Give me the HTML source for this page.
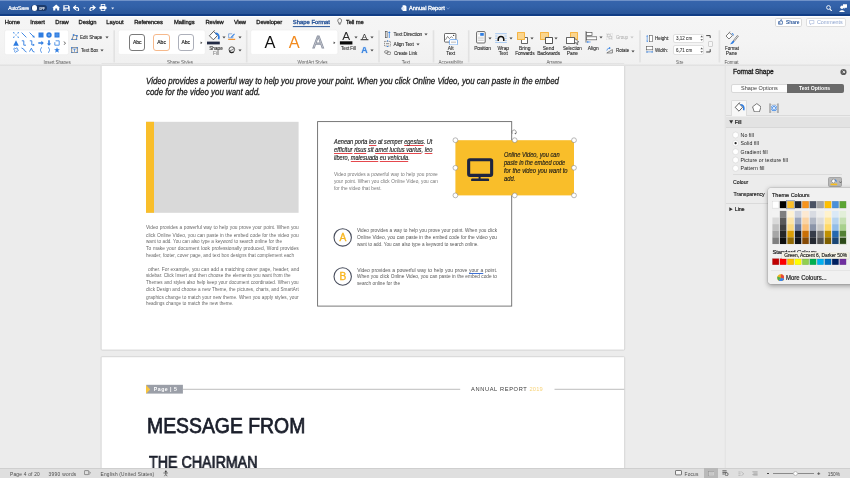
<!DOCTYPE html>
<html lang="en"><head><meta charset="utf-8"><title>Annual Report</title>
<style>
html,body{margin:0;padding:0}
body{width:850px;height:478px;overflow:hidden;position:relative;background:#ebebeb;font-family:"Liberation Sans",sans-serif;}
#root{position:absolute;left:0;top:0;width:850px;height:478px;overflow:hidden;will-change:transform;}
.t{position:absolute;white-space:pre;line-height:1;}
.b{position:absolute;display:block;}
.j{position:absolute;white-space:nowrap;line-height:1;text-align:justify;text-align-last:justify;}
</style></head><body><div id="root">

<!-- title bar -->
<div class="b" style="left:0.00px;top:0.00px;width:850.00px;height:16.00px;background:linear-gradient(#3765ad 0,#3261a8 40%,#2a5699 86%,#113d85 89%,#113d85 100%);"></div>
<div class="b" style="left:0.00px;top:0.00px;width:850.00px;height:1.00px;background:#7092c8;"></div>
<div class="t" style="left:8.20px;top:6.00px;font-size:5px;color:#fff;letter-spacing:-0.123px;-webkit-text-stroke:0.2px #fff;">AutoSave</div>
<div class="b" style="left:31.40px;top:5.00px;width:16.10px;height:6.00px;background:#1c3a6b;border-radius:3px;"></div>
<div class="b" style="left:31.60px;top:5.10px;width:5.80px;height:5.80px;background:#fff;border-radius:3px;"></div>
<div class="t" style="left:38.60px;top:8.00px;font-size:3.4px;color:#fff;font-weight:700;transform-origin:0 0;transform:scaleX(0.8553);">OFF</div>
<svg class="b" style="left:51.50px;top:4.30px;" width="8.4" height="7" viewBox="0 0 8.4 7"><path d="M4.2 0.4 L0.3 3.8 L1.2 3.8 L1.2 6.6 L3.3 6.6 L3.3 4.6 L5.1 4.6 L5.1 6.6 L7.2 6.6 L7.2 3.8 L8.1 3.8 Z" fill="#fff"/></svg>
<svg class="b" style="left:62.50px;top:4.80px;" width="7" height="6.4" viewBox="0 0 7 6.4"><path d="M0.3 0.3 H5.6 L6.7 1.4 V6.1 H0.3 Z" fill="#fff"/><rect x="1.6" y="0.9" width="3.4" height="1.7" fill="#2d5aa3"/><rect x="1.6" y="3.8" width="3.8" height="2.3" fill="#2d5aa3"/><rect x="2.2" y="4.3" width="1.2" height="1.4" fill="#fff"/></svg>
<svg class="b" style="left:73.00px;top:4.60px;" width="7.6" height="6.6" viewBox="0 0 7.6 6.6"><path d="M3 0.5 L0.5 2.6 L3 4.7" fill="none" stroke="#fff" stroke-width="1.2"/><path d="M0.9 2.6 H4.6 A2.1 2.1 0 0 1 4.6 6.2 H3" fill="none" stroke="#fff" stroke-width="1.2"/></svg>
<svg class="b" style="left:82.60px;top:7.00px;" width="3" height="2.4" viewBox="0 0 3 2.4"><path d="M0.2 0.4 L1.5 2 L2.8 0.4 Z" fill="#a9bfe3"/></svg>
<svg class="b" style="left:88.40px;top:4.60px;" width="7.6" height="6.6" viewBox="0 0 7.6 6.6"><path d="M4.6 0.5 L7.1 2.6 L4.6 4.7" fill="none" stroke="#fff" stroke-width="1.2"/><path d="M6.7 2.6 H3 A2.1 2.1 0 0 0 3 6.2 H4.2" fill="none" stroke="#fff" stroke-width="1.2"/></svg>
<svg class="b" style="left:98.70px;top:4.40px;" width="8" height="7" viewBox="0 0 8 7"><rect x="2.2" y="0.4" width="3.6" height="2.2" fill="none" stroke="#fff" stroke-width="0.8"/><rect x="0.5" y="2.4" width="7" height="2.8" rx="0.8" fill="#fff"/><rect x="2.2" y="4.4" width="3.6" height="2.2" fill="#2d5aa3" stroke="#fff" stroke-width="0.8"/></svg>
<svg class="b" style="left:111.30px;top:7.20px;" width="3.4" height="2.8" viewBox="0 0 3.4 2.8"><path d="M0.2 0.4 L1.7 2.4 L3.2 0.4 Z" fill="#dfe7f5"/></svg>
<svg class="b" style="left:401.00px;top:4.80px;" width="5.8" height="6.6" viewBox="0 0 5.8 6.6"><path d="M1.6 0.3 H4.2 L5.5 1.6 V6.3 H1.6 Z" fill="#fff"/><circle cx="1.9" cy="3.4" r="1.6" fill="#dce6f7"/></svg>
<div class="t" style="left:408.80px;top:5.00px;font-size:6px;color:#fff;transform-origin:0 0;transform:scaleX(0.9307);-webkit-text-stroke:0.3px #fff;">Annual Report</div>
<svg class="b" style="left:446.00px;top:7.20px;" width="4" height="3" viewBox="0 0 4 3"><path d="M0.5 0.5 L2 2.2 L3.5 0.5" fill="none" stroke="#7f9fd6" stroke-width="0.7"/></svg>
<svg class="b" style="left:826.00px;top:4.60px;" width="6.4" height="6.8" viewBox="0 0 6.4 6.8"><circle cx="2.5" cy="2.5" r="1.9" fill="none" stroke="#fff" stroke-width="0.9"/><path d="M3.9 4 L5.9 6.2" stroke="#fff" stroke-width="1.1"/></svg>
<svg class="b" style="left:838.50px;top:3.60px;" width="8.2" height="8.6" viewBox="0 0 8.2 8.6"><circle cx="3" cy="3.2" r="1.7" fill="#fff"/><path d="M0.2 8.4 C0.2 5.4 5.8 5.4 5.8 8.4 Z" fill="#fff"/><path d="M4 0.3 H8 V3.8 H6.4 L5.4 4.9 V3.8 H4 Z" fill="#fff"/></svg>
<!-- ribbon -->
<div class="b" style="left:0.00px;top:15.60px;width:850.00px;height:50.70px;background:linear-gradient(#f5f5f5 0,#f4f4f4 50%,#f0f0f0 100%);"></div>
<div class="b" style="left:0.00px;top:15.60px;width:850.00px;height:1.90px;background:linear-gradient(#ffffff 0,#ffffff 60%,#f4f4f4 100%);"></div>
<div class="t" style="left:4.80px;top:20.00px;font-size:5.8px;color:#1e1e1e;letter-spacing:-0.117px;-webkit-text-stroke:0.3px #1e1e1e;">Home</div>
<div class="t" style="left:30.20px;top:20.00px;font-size:5.8px;color:#1e1e1e;letter-spacing:0.050px;-webkit-text-stroke:0.3px #1e1e1e;">Insert</div>
<div class="t" style="left:55.30px;top:20.00px;font-size:5.8px;color:#1e1e1e;letter-spacing:-0.008px;-webkit-text-stroke:0.3px #1e1e1e;">Draw</div>
<div class="t" style="left:78.50px;top:20.00px;font-size:5.8px;color:#1e1e1e;letter-spacing:-0.008px;-webkit-text-stroke:0.3px #1e1e1e;">Design</div>
<div class="t" style="left:106.30px;top:20.00px;font-size:5.8px;color:#1e1e1e;letter-spacing:-0.018px;-webkit-text-stroke:0.3px #1e1e1e;">Layout</div>
<div class="t" style="left:134.20px;top:20.00px;font-size:5.8px;color:#1e1e1e;letter-spacing:-0.106px;-webkit-text-stroke:0.3px #1e1e1e;">References</div>
<div class="t" style="left:173.90px;top:20.00px;font-size:5.8px;color:#1e1e1e;letter-spacing:-0.083px;-webkit-text-stroke:0.3px #1e1e1e;">Mailings</div>
<div class="t" style="left:205.60px;top:20.00px;font-size:5.8px;color:#1e1e1e;letter-spacing:-0.169px;-webkit-text-stroke:0.3px #1e1e1e;">Review</div>
<div class="t" style="left:234.00px;top:20.00px;font-size:5.8px;color:#1e1e1e;letter-spacing:-0.142px;-webkit-text-stroke:0.3px #1e1e1e;">View</div>
<div class="t" style="left:256.30px;top:20.00px;font-size:5.8px;color:#1e1e1e;letter-spacing:-0.082px;-webkit-text-stroke:0.3px #1e1e1e;">Developer</div>
<div class="t" style="left:292.80px;top:20.00px;font-size:5.8px;color:#2b579a;letter-spacing:0.039px;-webkit-text-stroke:0.35px #2b579a;">Shape Format</div>
<svg class="b" style="left:291px;top:25px" width="40" height="4"><rect x="1.80" y="1.10" width="37.20" height="1.00" rx="0" fill="#2b579a"/></svg>
<svg class="b" style="left:336.60px;top:18.40px;" width="5.4" height="7.4" viewBox="0 0 5.4 7.4"><path d="M2.7 0.5 A2.1 2.1 0 0 1 3.9 4.2 V5.2 H1.5 V4.2 A2.1 2.1 0 0 1 2.7 0.5 Z" fill="none" stroke="#333" stroke-width="0.6"/><path d="M1.8 6.2 H3.6" stroke="#333" stroke-width="0.6"/></svg>
<div class="t" style="left:346.00px;top:20.00px;font-size:5.8px;color:#1e1e1e;letter-spacing:-0.125px;-webkit-text-stroke:0.3px #1e1e1e;">Tell me</div>
<div class="b" style="left:774.60px;top:17.60px;width:27.40px;height:9.70px;background:#fff;border:0.7px solid #d9d9d9;box-sizing:border-box;border-radius:1.8px;"></div>
<svg class="b" style="left:777.50px;top:19.40px;" width="5.2" height="5.6" viewBox="0 0 5.2 5.6"><path d="M0.5 2.6 H1.8 V5.2 H0.5 Z M1.8 2.8 L3 0.5 C3.8 0.5 3.6 1.6 3.4 2.3 H4.7 L4.3 5.2 H1.8" fill="none" stroke="#2b579a" stroke-width="0.7"/></svg>
<div class="t" style="left:785.50px;top:20.00px;font-size:5.4px;color:#2b579a;font-weight:700;transform-origin:0 0;transform:scaleX(0.9009);">Share</div>
<div class="b" style="left:806.00px;top:17.60px;width:39.70px;height:9.70px;background:#fff;border:0.7px solid #dedede;box-sizing:border-box;border-radius:1.8px;"></div>
<svg class="b" style="left:809.40px;top:19.80px;" width="5.4" height="5.4" viewBox="0 0 5.4 5.4"><path d="M0.5 0.5 H4.9 V3.6 H2.6 L1.5 4.8 V3.6 H0.5 Z" fill="none" stroke="#9fb2d6" stroke-width="0.6"/></svg>
<div class="t" style="left:817.00px;top:20.00px;font-size:5.4px;color:#8fa5cf;letter-spacing:-0.058px;">Comments</div>
<svg class="b" style="left:112px;top:29px" width="4" height="35"><rect x="1.40" y="1.30" width="1.60" height="32.10" rx="0" fill="#e2e2e2"/></svg>
<svg class="b" style="left:244px;top:29px" width="5" height="35"><rect x="1.90" y="1.30" width="1.60" height="32.10" rx="0" fill="#e2e2e2"/></svg>
<svg class="b" style="left:377px;top:29px" width="4" height="35"><rect x="1.20" y="1.30" width="1.60" height="32.10" rx="0" fill="#e2e2e2"/></svg>
<svg class="b" style="left:431px;top:29px" width="5" height="35"><rect x="1.70" y="1.30" width="1.60" height="32.10" rx="0" fill="#e2e2e2"/></svg>
<svg class="b" style="left:466px;top:29px" width="5" height="35"><rect x="1.90" y="1.30" width="1.60" height="32.10" rx="0" fill="#e2e2e2"/></svg>
<svg class="b" style="left:638px;top:29px" width="4" height="35"><rect x="1.20" y="1.30" width="1.60" height="32.10" rx="0" fill="#e2e2e2"/></svg>
<svg class="b" style="left:717px;top:29px" width="5" height="35"><rect x="1.60" y="1.30" width="1.60" height="32.10" rx="0" fill="#e2e2e2"/></svg>
<div class="t" style="left:43.60px;top:61.00px;font-size:4.6px;color:#5a5a5a;letter-spacing:-0.105px;">Insert Shapes</div>
<div class="t" style="left:167.00px;top:61.00px;font-size:4.6px;color:#5a5a5a;letter-spacing:-0.090px;">Shape Styles</div>
<div class="t" style="left:297.50px;top:61.00px;font-size:4.6px;color:#5a5a5a;letter-spacing:-0.047px;">WordArt Styles</div>
<div class="t" style="left:401.80px;top:61.00px;font-size:4.6px;color:#5a5a5a;letter-spacing:-0.059px;">Text</div>
<div class="t" style="left:438.40px;top:61.00px;font-size:4.6px;color:#5a5a5a;letter-spacing:-0.033px;">Accessibility</div>
<div class="t" style="left:546.40px;top:61.00px;font-size:4.6px;color:#5a5a5a;letter-spacing:-0.106px;">Arrange</div>
<div class="t" style="left:675.80px;top:61.00px;font-size:4.6px;color:#5a5a5a;transform-origin:0 0;transform:scaleX(0.8392);">Size</div>
<div class="t" style="left:724.40px;top:61.00px;font-size:4.6px;color:#5a5a5a;letter-spacing:-0.060px;">Format</div>
<svg class="b" style="left:3px;top:29px" width="67" height="27"><rect x="1.60" y="1.10" width="64.00" height="24.60" rx="2" fill="#fff" stroke="#e6e6e6" stroke-width="0.5"/></svg>
<svg class="b" style="left:13.00px;top:31.90px;" width="6" height="6" viewBox="0 0 6 6"><path d="M0.5 0.5 L5.5 5.5 M5.5 0.5 L0.5 5.5" stroke="#9fc4f2" stroke-width="0.6"/><rect x="0" y="0" width="1.3" height="1.3" fill="#6aa5ec"/><rect x="4.7" y="0" width="1.3" height="1.3" fill="#6aa5ec"/><rect x="0" y="4.7" width="1.3" height="1.3" fill="#6aa5ec"/><rect x="4.7" y="4.7" width="1.3" height="1.3" fill="#6aa5ec"/></svg>
<svg class="b" style="left:21.20px;top:31.90px;" width="6" height="6" viewBox="0 0 6 6"><path d="M0.6 0.6 L5.4 5.4" stroke="#2f7de1" stroke-width="0.9"/></svg>
<svg class="b" style="left:29.40px;top:31.90px;" width="6" height="6" viewBox="0 0 6 6"><path d="M0.6 0.6 L4.6 4.6" stroke="#2f7de1" stroke-width="0.9"/><path d="M5.8 5.8 L3.2 5 L5 3.2 Z" fill="#2f7de1"/></svg>
<svg class="b" style="left:37.50px;top:31.90px;" width="6" height="6" viewBox="0 0 6 6"><rect x="0.5" y="0.5" width="5" height="5" fill="#2f7de1"/></svg>
<svg class="b" style="left:45.70px;top:31.90px;" width="6" height="6" viewBox="0 0 6 6"><circle cx="3" cy="3" r="2.7" fill="#2f7de1"/><circle cx="3" cy="3" r="0.8" fill="#9fc4f2"/></svg>
<svg class="b" style="left:54.20px;top:31.90px;" width="6" height="6" viewBox="0 0 6 6"><rect x="0.5" y="0.5" width="5" height="5" fill="#2f7de1"/><path d="M0.5 3 H5.5 M3 0.5 V5.5" stroke="#7fb0ee" stroke-width="0.4"/></svg>
<svg class="b" style="left:13.00px;top:39.70px;" width="6" height="6" viewBox="0 0 6 6"><path d="M3 0.3 L5.8 5.7 H0.2 Z" fill="#2f7de1"/></svg>
<svg class="b" style="left:21.20px;top:39.70px;" width="6" height="6" viewBox="0 0 6 6"><path d="M0.8 0.8 H2.8 V5.2 H5" fill="none" stroke="#2f7de1" stroke-width="0.9"/></svg>
<svg class="b" style="left:29.40px;top:39.70px;" width="6" height="6" viewBox="0 0 6 6"><path d="M0.8 0.8 H2.8 V5 H4.2" fill="none" stroke="#2f7de1" stroke-width="0.9"/><path d="M5.8 5 L4 3.8 V6 Z" fill="#2f7de1"/></svg>
<svg class="b" style="left:37.50px;top:39.70px;" width="6" height="6" viewBox="0 0 6 6"><path d="M0.3 2.2 H3.4 V0.8 L5.8 3 L3.4 5.2 V3.8 H0.3 Z" fill="#2f7de1"/></svg>
<svg class="b" style="left:45.70px;top:39.70px;" width="6" height="6" viewBox="0 0 6 6"><path d="M2.2 0.3 V3.4 H0.8 L3 5.8 L5.2 3.4 H3.8 V0.3 Z" fill="#2f7de1"/></svg>
<svg class="b" style="left:54.20px;top:39.70px;" width="6" height="6" viewBox="0 0 6 6"><path d="M1.6 0.8 H5.2 V5.2 H0.8 V2.2" fill="none" stroke="#2f7de1" stroke-width="0.8"/></svg>
<svg class="b" style="left:13.00px;top:47.30px;" width="6" height="6" viewBox="0 0 6 6"><path d="M3 2 C0.5 -0.5 0 3 2 3.4 C0.4 5.4 3.6 6.2 3.6 4 C5.6 5 6 2 4.2 2.4 C5 0.4 3 0 3 2 Z" fill="none" stroke="#2f7de1" stroke-width="0.7"/></svg>
<svg class="b" style="left:21.20px;top:47.30px;" width="6" height="6" viewBox="0 0 6 6"><path d="M0.5 1 L2.6 2 L3.4 3.6 L5.5 5" fill="none" stroke="#2f7de1" stroke-width="0.9"/></svg>
<svg class="b" style="left:29.40px;top:47.30px;" width="6" height="6" viewBox="0 0 6 6"><path d="M0.5 4.6 L2.4 1.2 L3.8 4.4 L5.5 5" fill="none" stroke="#2f7de1" stroke-width="0.9"/></svg>
<svg class="b" style="left:37.50px;top:47.30px;" width="6" height="6" viewBox="0 0 6 6"><path d="M4 0.4 C2.6 0.4 3.2 2.6 2 3 C3.2 3.4 2.6 5.6 4 5.6" fill="none" stroke="#2f7de1" stroke-width="0.8"/></svg>
<svg class="b" style="left:45.70px;top:47.30px;" width="6" height="6" viewBox="0 0 6 6"><path d="M2 0.4 C3.4 0.4 2.8 2.6 4 3 C2.8 3.4 3.4 5.6 2 5.6" fill="none" stroke="#2f7de1" stroke-width="0.8"/></svg>
<svg class="b" style="left:54.20px;top:47.30px;" width="6" height="6" viewBox="0 0 6 6"><path d="M3 0.2 L3.8 2.2 L5.9 2.3 L4.2 3.6 L4.8 5.7 L3 4.5 L1.2 5.7 L1.8 3.6 L0.1 2.3 L2.2 2.2 Z" fill="#2f7de1"/></svg>
<svg class="b" style="left:63.40px;top:40.50px;" width="3.4" height="4.4" viewBox="0 0 3.4 4.4"><path d="M0.7 0.5 L2.6 2.2 L0.7 3.9" fill="none" stroke="#333" stroke-width="0.7"/></svg>
<svg class="b" style="left:71.20px;top:33.70px;" width="7" height="6.6" viewBox="0 0 7 6.6"><path d="M1 5.6 L2.6 1 L6 1.8 L5.4 5.6 Z" fill="none" stroke="#444" stroke-width="0.6"/><rect x="0.2" y="4.8" width="1.5" height="1.5" fill="#2f7de1"/><rect x="1.8" y="0.2" width="1.5" height="1.5" fill="#2f7de1"/><rect x="5.2" y="1" width="1.5" height="1.5" fill="#2f7de1"/><rect x="4.7" y="4.8" width="1.5" height="1.5" fill="#2f7de1"/></svg>
<div class="t" style="left:80.40px;top:36.00px;font-size:4.9px;color:#1e1e1e;transform-origin:0 0;transform:scaleX(0.9358);-webkit-text-stroke:0.08px #1e1e1e;">Edit Shape</div>
<svg class="b" style="left:104.60px;top:36.10px;" width="4" height="3" viewBox="0 0 4 3"><path d="M0.4 0.5 L2 2.5 L3.6 0.5 Z" fill="#444"/></svg>
<svg class="b" style="left:71.20px;top:46.90px;" width="7" height="6.6" viewBox="0 0 7 6.6"><rect x="0.8" y="0.8" width="5.4" height="5" fill="none" stroke="#444" stroke-width="0.6"/><path d="M2.3 2.2 H4.7 M3.5 2.2 V4.8" stroke="#2f7de1" stroke-width="0.7"/><rect x="0.1" y="0.1" width="1.3" height="1.3" fill="#2f7de1"/><rect x="5.6" y="0.1" width="1.3" height="1.3" fill="#2f7de1"/><rect x="0.1" y="5.2" width="1.3" height="1.3" fill="#2f7de1"/><rect x="5.6" y="5.2" width="1.3" height="1.3" fill="#2f7de1"/></svg>
<div class="t" style="left:81.00px;top:49.00px;font-size:4.9px;color:#1e1e1e;transform-origin:0 0;transform:scaleX(0.9272);-webkit-text-stroke:0.08px #1e1e1e;">Text Box</div>
<svg class="b" style="left:99.80px;top:49.30px;" width="4" height="3" viewBox="0 0 4 3"><path d="M0.4 0.5 L2 2.5 L3.6 0.5 Z" fill="#444"/></svg>
<svg class="b" style="left:117px;top:29px" width="90" height="27"><rect x="1.30" y="1.10" width="86.90" height="24.30" rx="2" fill="#fff" stroke="#e8e8e8" stroke-width="0.5"/></svg>
<div class="b" style="left:129.00px;top:34.40px;width:16.40px;height:16.20px;background:#fff;border:1px solid #7a7a7a;box-sizing:border-box;border-radius:3px;"></div>
<div class="t" style="left:37.20px;width:200px;text-align:center;top:40.00px;font-size:5px;color:#222;-webkit-text-stroke:0.15px #222;">Abc</div>
<div class="b" style="left:153.40px;top:34.40px;width:16.40px;height:16.20px;background:#fff;border:1px solid #f6b98c;box-sizing:border-box;border-radius:3px;"></div>
<div class="t" style="left:61.60px;width:200px;text-align:center;top:40.00px;font-size:5px;color:#222;-webkit-text-stroke:0.15px #222;">Abc</div>
<div class="b" style="left:177.60px;top:34.40px;width:16.40px;height:16.20px;background:#fff;border:1px solid #adb0ba;box-sizing:border-box;border-radius:3px;"></div>
<div class="t" style="left:85.80px;width:200px;text-align:center;top:40.00px;font-size:5px;color:#222;-webkit-text-stroke:0.15px #222;">Abc</div>
<svg class="b" style="left:200.40px;top:40.80px;" width="3" height="3.6" viewBox="0 0 3 3.6"><path d="M0.6 0.4 L2.4 1.8 L0.6 3.2 Z" fill="#444"/></svg>
<svg class="b" style="left:207.50px;top:30.40px;" width="13" height="10.6" viewBox="0 0 13 10.6"><path d="M5.6 1.4 L1.4 5.8 L5.4 9.8 L9.4 5.6 Z" fill="#fff" stroke="#3a3a3a" stroke-width="0.8"/><path d="M5.6 1.4 L6.6 0.3" stroke="#3a3a3a" stroke-width="0.7"/><path d="M7.4 3.4 C10 3 11.6 5.6 10.6 9.2" fill="none" stroke="#2f7de1" stroke-width="1.7"/></svg>
<svg class="b" style="left:206px;top:40px" width="15" height="6"><rect x="1.00" y="1.60" width="12.80" height="2.80" rx="0" fill="#232b45"/></svg>
<svg class="b" style="left:221.60px;top:36.20px;" width="4" height="3" viewBox="0 0 4 3"><path d="M0.4 0.5 L2 2.5 L3.6 0.5 Z" fill="#444"/></svg>
<div class="t" style="left:116.00px;width:200px;text-align:center;top:47.00px;font-size:4.7px;color:#1e1e1e;-webkit-text-stroke:0.08px #1e1e1e;">Shape</div>
<div class="t" style="left:116.00px;width:200px;text-align:center;top:52.00px;font-size:4.7px;color:#808080;-webkit-text-stroke:0.08px #808080;">Fill</div>
<svg class="b" style="left:228.00px;top:33.20px;" width="7.6" height="7" viewBox="0 0 7.6 7"><path d="M0.6 0.8 H4.2 M0.6 0.8 V4.8 H5 V3.4" fill="none" stroke="#5b8fd6" stroke-width="0.7"/><path d="M3 3.8 L6.2 0.6 L6.9 1.3 L3.7 4.5 L2.7 4.8 Z" fill="#2f7de1"/><rect x="0.2" y="5.8" width="7" height="1.1" fill="#f28a1e"/></svg>
<svg class="b" style="left:237.60px;top:35.70px;" width="4" height="3" viewBox="0 0 4 3"><path d="M0.4 0.5 L2 2.5 L3.6 0.5 Z" fill="#444"/></svg>
<svg class="b" style="left:228.00px;top:46.40px;" width="8" height="7.4" viewBox="0 0 8 7.4"><circle cx="3.8" cy="3.6" r="2.8" fill="none" stroke="#333" stroke-width="0.8"/><path d="M1.2 4.6 C2.8 4.4 4.2 4.4 6.4 2.2" fill="none" stroke="#333" stroke-width="0.7"/><path d="M1.4 5.4 A2.9 2.9 0 0 0 5.6 6" fill="none" stroke="#222" stroke-width="1.1"/></svg>
<svg class="b" style="left:237.60px;top:49.20px;" width="4" height="3" viewBox="0 0 4 3"><path d="M0.4 0.5 L2 2.5 L3.6 0.5 Z" fill="#444"/></svg>
<svg class="b" style="left:249px;top:29px" width="90" height="27"><rect x="1.70" y="1.10" width="87.10" height="24.30" rx="2" fill="#fff" stroke="#e8e8e8" stroke-width="0.5"/></svg>
<div class="t" style="left:169.90px;width:200px;text-align:center;top:34.00px;font-size:16.4px;color:#111;">A</div>
<div class="t" style="left:194.10px;width:200px;text-align:center;top:34.00px;font-size:16.4px;color:#f28a1e;">A</div>
<div class="t" style="left:218.20px;width:200px;text-align:center;top:34.00px;font-size:16.4px;color:#e9eaee;-webkit-text-stroke:0.9px #8f95a3;">A</div>
<svg class="b" style="left:332.60px;top:40.80px;" width="3" height="3.6" viewBox="0 0 3 3.6"><path d="M0.6 0.4 L2.4 1.8 L0.6 3.2 Z" fill="#444"/></svg>
<div class="t" style="left:246.20px;width:200px;text-align:center;top:31.00px;font-size:11.8px;color:#2a2a2a;">A</div>
<svg class="b" style="left:338px;top:40px" width="16" height="6"><rect x="1.90" y="1.30" width="12.50" height="3.20" rx="0" fill="#0a0a0a"/></svg>
<svg class="b" style="left:354.00px;top:36.20px;" width="4" height="3" viewBox="0 0 4 3"><path d="M0.4 0.5 L2 2.5 L3.6 0.5 Z" fill="#444"/></svg>
<div class="t" style="left:340.60px;top:47.00px;font-size:4.9px;color:#1e1e1e;transform-origin:0 0;transform:scaleX(0.9048);-webkit-text-stroke:0.08px #1e1e1e;">Text Fill</div>
<div class="t" style="left:264.50px;width:200px;text-align:center;top:33.00px;font-size:8px;color:#3a3a3a;">A</div>
<svg class="b" style="left:359px;top:38px" width="11" height="4"><rect x="1.60" y="1.20" width="7.80" height="1.00" rx="0" fill="#222"/></svg>
<svg class="b" style="left:370.00px;top:35.70px;" width="4" height="3" viewBox="0 0 4 3"><path d="M0.4 0.5 L2 2.5 L3.6 0.5 Z" fill="#444"/></svg>
<div class="t" style="left:264.50px;width:200px;text-align:center;top:46.00px;font-size:8.8px;color:#3d86e0;font-weight:700;text-shadow:0 0 1.2px #6aa9f5;">A</div>
<svg class="b" style="left:370.00px;top:49.20px;" width="4" height="3" viewBox="0 0 4 3"><path d="M0.4 0.5 L2 2.5 L3.6 0.5 Z" fill="#444"/></svg>
<svg class="b" style="left:384.80px;top:30.80px;" width="6" height="7.4" viewBox="0 0 6 7.4"><rect x="0.4" y="0.6" width="1.7" height="6.2" fill="none" stroke="#444" stroke-width="0.6"/><path d="M4.3 7 V1.4" stroke="#2f7de1" stroke-width="0.8"/><path d="M4.3 0.2 L5.6 2 H3 Z" fill="#2f7de1"/></svg>
<div class="t" style="left:393.60px;top:33.00px;font-size:4.9px;color:#1e1e1e;letter-spacing:-0.073px;-webkit-text-stroke:0.08px #1e1e1e;">Text Direction</div>
<svg class="b" style="left:424.30px;top:33.30px;" width="4" height="3" viewBox="0 0 4 3"><path d="M0.4 0.5 L2 2.5 L3.6 0.5 Z" fill="#444"/></svg>
<svg class="b" style="left:384.00px;top:39.80px;" width="7.2" height="7.4" viewBox="0 0 7.2 7.4"><rect x="0.5" y="1.4" width="6.2" height="4.6" fill="none" stroke="#555" stroke-width="0.6" stroke-dasharray="1.4 0.7"/><path d="M2 3.7 H5.2" stroke="#444" stroke-width="0.6"/><path d="M3.6 0 L4.6 1.3 H2.6 Z M3.6 7.4 L4.6 6.1 H2.6 Z" fill="#2f7de1"/></svg>
<div class="t" style="left:393.60px;top:43.00px;font-size:4.9px;color:#1e1e1e;letter-spacing:-0.103px;-webkit-text-stroke:0.08px #1e1e1e;">Align Text</div>
<svg class="b" style="left:415.50px;top:42.60px;" width="4" height="3" viewBox="0 0 4 3"><path d="M0.4 0.5 L2 2.5 L3.6 0.5 Z" fill="#444"/></svg>
<svg class="b" style="left:384.00px;top:50.20px;" width="7.4" height="5.2" viewBox="0 0 7.4 5.2"><ellipse cx="2.4" cy="2" rx="1.9" ry="1.4" fill="none" stroke="#555" stroke-width="0.6"/><ellipse cx="4.8" cy="3.2" rx="2.1" ry="1.5" fill="none" stroke="#555" stroke-width="0.6"/></svg>
<div class="t" style="left:393.60px;top:52.00px;font-size:4.9px;color:#1e1e1e;transform-origin:0 0;transform:scaleX(0.9274);-webkit-text-stroke:0.08px #1e1e1e;">Create Link</div>
<svg class="b" style="left:444.00px;top:32.60px;" width="14" height="12.6" viewBox="0 0 14 12.6"><rect x="0.5" y="0.5" width="11.4" height="8.6" rx="0.8" fill="#fff" stroke="#444" stroke-width="0.8"/><path d="M1.4 7 L3.6 3.4 L5.4 5.6 L7.4 3.6 L9 5.2" fill="none" stroke="#444" stroke-width="0.6"/><circle cx="9.6" cy="2.4" r="0.7" fill="#444"/><rect x="5.4" y="6.6" width="8.2" height="5.4" rx="1.2" fill="#fff" stroke="#5b9bea" stroke-width="0.8"/><path d="M7 9.3 H12" stroke="#cfcfcf" stroke-width="1.6"/></svg>
<div class="t" style="left:350.70px;width:200px;text-align:center;top:47.00px;font-size:4.9px;color:#1e1e1e;-webkit-text-stroke:0.08px #1e1e1e;">Alt</div>
<div class="t" style="left:350.70px;width:200px;text-align:center;top:52.00px;font-size:4.9px;color:#1e1e1e;-webkit-text-stroke:0.08px #1e1e1e;">Text</div>
<svg class="b" style="left:475.60px;top:31.40px;" width="10" height="12.8" viewBox="0 0 10 12.8"><rect x="0.6" y="0.6" width="8.6" height="11.4" rx="1" fill="#fff" stroke="#555" stroke-width="0.9"/><rect x="4.2" y="2" width="3.6" height="2.8" fill="#2f7de1"/><path d="M2 3 H3.6 M2 6.2 H7.8 M2 7.8 H7.8 M2 9.4 H7.8" stroke="#bdbdbd" stroke-width="0.7"/></svg>
<svg class="b" style="left:488.20px;top:36.50px;" width="4" height="3" viewBox="0 0 4 3"><path d="M0.4 0.5 L2 2.5 L3.6 0.5 Z" fill="#444"/></svg>
<div class="t" style="left:474.20px;top:47.00px;font-size:4.9px;color:#1e1e1e;letter-spacing:-0.088px;-webkit-text-stroke:0.08px #1e1e1e;">Position</div>
<svg class="b" style="left:495.40px;top:32.60px;" width="12" height="10" viewBox="0 0 12 10"><path d="M0.2 0.7 H11.8 M0.2 3 H2.6 M9.4 3 H11.8 M0.2 5.3 H2 M10 5.3 H11.8 M0.2 7.6 H2 M10 7.6 H11.8 M0.2 9.6 H11.8" stroke="#7fb2ee" stroke-width="0.7"/><path d="M3.2 8 V6.4 A2.8 2.8 0 0 1 8.8 6.4 V8" fill="none" stroke="#111" stroke-width="1.5"/></svg>
<svg class="b" style="left:509.20px;top:36.50px;" width="4" height="3" viewBox="0 0 4 3"><path d="M0.4 0.5 L2 2.5 L3.6 0.5 Z" fill="#444"/></svg>
<div class="t" style="left:403.30px;width:200px;text-align:center;top:47.00px;font-size:4.9px;color:#1e1e1e;-webkit-text-stroke:0.08px #1e1e1e;">Wrap</div>
<div class="t" style="left:403.30px;width:200px;text-align:center;top:52.00px;font-size:4.9px;color:#1e1e1e;-webkit-text-stroke:0.08px #1e1e1e;">Text</div>
<div class="b" style="left:521.30px;top:36.60px;width:7.10px;height:7.20px;background:#fff;border:0.8px solid #666;box-sizing:border-box;border-radius:0.8px;"></div>
<div class="b" style="left:516.50px;top:32.20px;width:8.50px;height:7.80px;background:#fbd58d;border:0.8px solid #f6b545;box-sizing:border-box;border-radius:0.6px;"></div>
<svg class="b" style="left:530.30px;top:36.50px;" width="4" height="3" viewBox="0 0 4 3"><path d="M0.4 0.5 L2 2.5 L3.6 0.5 Z" fill="#444"/></svg>
<div class="t" style="left:424.80px;width:200px;text-align:center;top:47.00px;font-size:4.9px;color:#1e1e1e;-webkit-text-stroke:0.08px #1e1e1e;">Bring</div>
<div class="t" style="left:515.15px;top:52.00px;font-size:4.9px;color:#1e1e1e;letter-spacing:-0.136px;-webkit-text-stroke:0.08px #1e1e1e;">Forwards</div>
<div class="b" style="left:540.00px;top:32.20px;width:8.50px;height:7.80px;background:#fbd58d;border:0.8px solid #f6b545;box-sizing:border-box;border-radius:0.6px;"></div>
<div class="b" style="left:544.50px;top:36.60px;width:8.20px;height:7.20px;background:#fff;border:0.8px solid #555;box-sizing:border-box;border-radius:0.8px;"></div>
<svg class="b" style="left:554.00px;top:36.50px;" width="4" height="3" viewBox="0 0 4 3"><path d="M0.4 0.5 L2 2.5 L3.6 0.5 Z" fill="#444"/></svg>
<div class="t" style="left:448.50px;width:200px;text-align:center;top:47.00px;font-size:4.9px;color:#1e1e1e;-webkit-text-stroke:0.08px #1e1e1e;">Send</div>
<div class="t" style="left:537.20px;top:52.00px;font-size:4.9px;color:#1e1e1e;letter-spacing:-0.125px;-webkit-text-stroke:0.08px #1e1e1e;">Backwards</div>
<div class="b" style="left:570.40px;top:32.20px;width:7.60px;height:7.60px;background:#fbd58d;border:0.8px solid #f6b545;box-sizing:border-box;border-radius:0.6px;"></div>
<div class="b" style="left:566.30px;top:37.20px;width:8.50px;height:6.60px;background:#fff;border:0.8px solid #666;box-sizing:border-box;border-radius:0.6px;"></div>
<svg class="b" style="left:574.20px;top:37.60px;" width="5.4" height="7.2" viewBox="0 0 5.4 7.2"><path d="M0.6 0.4 L4.8 3.9 L2.9 4.1 L3.9 6.3 L3 6.7 L2 4.5 L0.6 5.6 Z" fill="#fff" stroke="#333" stroke-width="0.6"/></svg>
<div class="t" style="left:563.00px;top:47.00px;font-size:4.9px;color:#1e1e1e;transform-origin:0 0;transform:scaleX(0.9342);-webkit-text-stroke:0.08px #1e1e1e;">Selection</div>
<div class="t" style="left:472.40px;width:200px;text-align:center;top:52.00px;font-size:4.9px;color:#1e1e1e;-webkit-text-stroke:0.08px #1e1e1e;">Pane</div>
<svg class="b" style="left:584.60px;top:31.20px;" width="12.6" height="12.8" viewBox="0 0 12.6 12.8"><path d="M1 0.2 V11.6" stroke="#555" stroke-width="0.8"/><rect x="1.4" y="1.6" width="5.6" height="3" fill="#fff" stroke="#555" stroke-width="0.7"/><rect x="1.4" y="5.8" width="10.4" height="3" fill="#fff" stroke="#555" stroke-width="0.7"/><path d="M5.6 11 H2.6" stroke="#2f7de1" stroke-width="0.7"/><path d="M1.4 11 L3.2 9.9 V12.1 Z" fill="#2f7de1"/></svg>
<svg class="b" style="left:599.20px;top:36.30px;" width="4" height="3" viewBox="0 0 4 3"><path d="M0.4 0.5 L2 2.5 L3.6 0.5 Z" fill="#444"/></svg>
<div class="t" style="left:493.30px;width:200px;text-align:center;top:47.00px;font-size:4.9px;color:#1e1e1e;-webkit-text-stroke:0.08px #1e1e1e;">Align</div>
<svg class="b" style="left:606.00px;top:33.30px;" width="7.2" height="7.2" viewBox="0 0 7.2 7.2"><rect x="0.4" y="0.4" width="6.4" height="6.4" fill="none" stroke="#c9c9c9" stroke-width="0.5" stroke-dasharray="1 0.7"/><rect x="1.4" y="1.6" width="2.8" height="2.4" fill="none" stroke="#bdbdbd" stroke-width="0.6"/><rect x="3" y="3.2" width="2.8" height="2.6" fill="#f3f3f3" stroke="#bdbdbd" stroke-width="0.6"/></svg>
<div class="t" style="left:615.70px;top:36.00px;font-size:4.9px;color:#b3b3b3;transform-origin:0 0;transform:scaleX(0.8754);-webkit-text-stroke:0.08px #b3b3b3;">Group</div>
<svg class="b" style="left:630.00px;top:36.00px;" width="4" height="3" viewBox="0 0 4 3"><path d="M0.4 0.5 L2 2.5 L3.6 0.5 Z" fill="#c4c4c4"/></svg>
<svg class="b" style="left:606.00px;top:46.80px;" width="7.4" height="6.8" viewBox="0 0 7.4 6.8"><path d="M0.8 6 L6.4 6 L6.4 2.6 Z" fill="none" stroke="#444" stroke-width="0.6"/><path d="M0.8 3.6 A3 3 0 0 1 3.6 1" fill="none" stroke="#2f7de1" stroke-width="0.7"/><path d="M3 0 L4.8 1 L3.2 2.2 Z" fill="#2f7de1"/></svg>
<div class="t" style="left:615.70px;top:49.00px;font-size:4.9px;color:#1e1e1e;transform-origin:0 0;transform:scaleX(0.9153);-webkit-text-stroke:0.08px #1e1e1e;">Rotate</div>
<svg class="b" style="left:630.90px;top:49.50px;" width="4" height="3" viewBox="0 0 4 3"><path d="M0.4 0.5 L2 2.5 L3.6 0.5 Z" fill="#444"/></svg>
<svg class="b" style="left:645.60px;top:34.60px;" width="7.2" height="7.2" viewBox="0 0 7.2 7.2"><rect x="3.6" y="0.4" width="3" height="6.4" fill="#fff" stroke="#555" stroke-width="0.6"/><path d="M1.2 1.4 V5.8" stroke="#2f7de1" stroke-width="0.6"/><path d="M1.2 0 L2.2 1.5 H0.2 Z M1.2 7.2 L2.2 5.7 H0.2 Z" fill="#2f7de1"/></svg>
<svg class="b" style="left:645.60px;top:46.20px;" width="7.2" height="7.2" viewBox="0 0 7.2 7.2"><rect x="0.4" y="0.4" width="6.4" height="3.4" fill="#fff" stroke="#555" stroke-width="0.6"/><path d="M0.6 4 V6.8 M6.6 4 V6.8" stroke="#999" stroke-width="0.4"/><path d="M1.4 5.9 H5.8" stroke="#2f7de1" stroke-width="0.6"/><path d="M0 5.9 L1.5 4.9 V6.9 Z M7.2 5.9 L5.7 4.9 V6.9 Z" fill="#2f7de1"/></svg>
<div class="t" style="left:654.80px;top:37.00px;font-size:4.9px;color:#1e1e1e;transform-origin:0 0;transform:scaleX(0.9226);-webkit-text-stroke:0.08px #1e1e1e;">Height:</div>
<div class="t" style="left:654.80px;top:49.00px;font-size:4.9px;color:#1e1e1e;transform-origin:0 0;transform:scaleX(0.9369);-webkit-text-stroke:0.08px #1e1e1e;">Width:</div>
<div class="b" style="left:673.00px;top:33.80px;width:31.30px;height:9.10px;background:#fff;border:0.6px solid #e0e0e0;box-sizing:border-box;border-radius:2px;"></div>
<div class="t" style="left:675.80px;top:37.00px;font-size:4.9px;color:#333;transform-origin:0 0;transform:scaleX(0.9307);-webkit-text-stroke:0.08px #333;">3,12 cm</div>
<svg class="b" style="left:699.60px;top:35.15px;" width="3.4" height="6.4" viewBox="0 0 3.4 6.4"><path d="M0.4 2.2 L1.7 0.6 L3 2.2 Z M0.4 4.2 L1.7 5.8 L3 4.2 Z" fill="#555"/></svg>
<div class="b" style="left:673.00px;top:45.40px;width:31.30px;height:9.20px;background:#fff;border:0.6px solid #e0e0e0;box-sizing:border-box;border-radius:2px;"></div>
<div class="t" style="left:675.80px;top:49.00px;font-size:4.9px;color:#333;transform-origin:0 0;transform:scaleX(0.9307);-webkit-text-stroke:0.08px #333;">6,71 cm</div>
<svg class="b" style="left:699.60px;top:46.80px;" width="3.4" height="6.4" viewBox="0 0 3.4 6.4"><path d="M0.4 2.2 L1.7 0.6 L3 2.2 Z M0.4 4.2 L1.7 5.8 L3 4.2 Z" fill="#555"/></svg>
<svg class="b" style="left:706.40px;top:34.80px;" width="5" height="3.6" viewBox="0 0 5 3.6"><path d="M0.2 0.6 H4.2 V3.4" fill="none" stroke="#333" stroke-width="0.9"/></svg>
<div class="b" style="left:707.80px;top:41.00px;width:5.10px;height:5.70px;background:#f7f7f7;border:0.6px solid #d0d0d0;box-sizing:border-box;border-radius:1px;"></div>
<svg class="b" style="left:706.40px;top:49.40px;" width="5" height="3.6" viewBox="0 0 5 3.6"><path d="M0.2 3 H4.2 V0.2" fill="none" stroke="#333" stroke-width="0.9"/></svg>
<svg class="b" style="left:725.00px;top:31.00px;" width="14.4" height="14.4" viewBox="0 0 14.4 14.4"><path d="M4.4 1.6 L1 5 L4 8 L7.4 4.6 Z" fill="#fff" stroke="#444" stroke-width="0.7"/><path d="M4.4 1.6 L5 0.6" stroke="#444" stroke-width="0.6"/><path d="M6.6 2 C8.4 2.2 9.2 3.6 8.6 5.2 C8.4 4 8 3.6 7.2 3.2 Z" fill="#2f7de1"/><path d="M13.4 5.2 L9.4 10.2 L8.4 9.6 L12.2 4.6 Z" fill="#fff" stroke="#444" stroke-width="0.6"/><path d="M9.4 10.2 C9 12 7.4 13.2 5 13.2 C6.6 12.2 6.6 10.6 8.4 9.6 Z" fill="#2f7de1"/></svg>
<div class="t" style="left:724.50px;top:47.00px;font-size:4.9px;color:#1e1e1e;transform-origin:0 0;transform:scaleX(0.9032);-webkit-text-stroke:0.08px #1e1e1e;">Format</div>
<div class="t" style="left:631.50px;width:200px;text-align:center;top:52.00px;font-size:4.9px;color:#1e1e1e;-webkit-text-stroke:0.08px #1e1e1e;">Pane</div>
<!-- document -->
<div class="b" style="left:0.00px;top:66.00px;width:725.30px;height:402.00px;background:#ececec;"></div>
<svg class="b" style="left:100px;top:63px" width="526" height="289"><rect x="1.10" y="1.00" width="523.60" height="286.10" rx="1" fill="#fff" stroke="#d6d6d6" stroke-width="1.0"/></svg>
<svg class="b" style="left:100px;top:355px" width="526" height="117"><rect x="1.10" y="1.70" width="523.60" height="114.30" rx="1" fill="#fff" stroke="#d6d6d6" stroke-width="1.0"/></svg>
<div class="b" style="left:0.00px;top:64.20px;width:850.00px;height:2.00px;background:linear-gradient(#ececec,#dedede);"></div>
<div class="t" style="left:146.00px;top:76.00px;font-size:9.4px;color:#1c1c1c;font-style:italic;transform-origin:0 0;transform:scaleX(0.8427);-webkit-text-stroke:0.3px #1c1c1c;">Video provides a powerful way to help you prove your point. When you click Online Video, you can paste in the embed</div>
<div class="t" style="left:146.00px;top:87.00px;font-size:9.4px;color:#1c1c1c;font-style:italic;transform-origin:0 0;transform:scaleX(0.8434);-webkit-text-stroke:0.3px #1c1c1c;">code for the video you want add.</div>
<svg class="b" style="left:145px;top:120px" width="155" height="94"><rect x="1.00" y="1.80" width="152.60" height="91.00" rx="0" fill="#d9d9d9"/></svg>
<svg class="b" style="left:145px;top:120px" width="10" height="94"><rect x="1.00" y="1.80" width="8.00" height="91.00" rx="0" fill="#f9be2a"/></svg>
<div class="j" style="left:146.00px;top:226.00px;width:154.99px;font-size:4.9px;color:#686868;transform-origin:0 0;transform:scaleX(0.9852);">Video provides a powerful way to help you prove your point. When you</div>
<div class="j" style="left:146.00px;top:234.00px;width:153.34px;font-size:4.9px;color:#686868;transform-origin:0 0;transform:scaleX(0.9958);">click Online Video, you can paste in the embed code for the video you</div>
<div class="j" style="left:146.00px;top:240.00px;width:143.23px;font-size:4.9px;color:#686868;transform-origin:0 0;transform:scaleX(0.9495);">want to add. You can also type a keyword to search online for the</div>
<div class="j" style="left:146.00px;top:247.00px;width:152.70px;font-size:4.9px;color:#686868;">To make your document look professionally produced, Word provides</div>
<div class="j" style="left:146.00px;top:254.00px;width:156.20px;font-size:4.9px;color:#686868;transform-origin:0 0;transform:scaleX(0.9475);">header, footer, cover page, and text box designs that complement each</div>
<div class="j" style="left:147.60px;top:268.00px;width:151.77px;font-size:4.9px;color:#686868;transform-origin:0 0;transform:scaleX(0.9956);">other. For example, you can add a matching cover page, header, and</div>
<div class="j" style="left:146.00px;top:274.00px;width:152.04px;font-size:4.9px;color:#686868;transform-origin:0 0;transform:scaleX(0.9510);">sidebar. Click Insert and then choose the elements you want from the</div>
<div class="j" style="left:146.00px;top:281.00px;width:161.70px;font-size:4.9px;color:#686868;transform-origin:0 0;transform:scaleX(0.9443);">Themes and styles also help keep your document coordinated. When you</div>
<div class="j" style="left:146.00px;top:288.00px;width:161.61px;font-size:4.9px;color:#686868;transform-origin:0 0;transform:scaleX(0.9449);">click Design and choose a new Theme, the pictures, charts, and SmartArt</div>
<div class="j" style="left:146.00px;top:296.00px;width:158.39px;font-size:4.9px;color:#686868;transform-origin:0 0;transform:scaleX(0.9641);">graphics change to match your new theme. When you apply styles, your</div>
<div class="j" style="left:146.00px;top:302.00px;width:93.55px;font-size:4.9px;color:#686868;transform-origin:0 0;transform:scaleX(0.9342);">headings change to match the new theme.</div>
<svg class="b" style="left:316px;top:120px" width="197" height="188"><rect x="1.60" y="1.60" width="194.10" height="184.50" rx="0" fill="#fff" stroke="#6a6a6a" stroke-width="0.9"/></svg>
<div class="t" style="left:333.70px;top:139.00px;font-size:7.1px;color:#1a1a1a;font-style:italic;transform-origin:0 0;transform:scaleX(0.7839);-webkit-text-stroke:0.15px #1a1a1a;">Aenean porta <span style="text-decoration:underline;text-decoration-color:#e5484d;text-decoration-thickness:0.6px;text-underline-offset:0.8px;">leo</span> at semper <span style="text-decoration:underline;text-decoration-color:#e5484d;text-decoration-thickness:0.6px;text-underline-offset:0.8px;">egestas</span>. Ut</div>
<div class="t" style="left:333.70px;top:147.00px;font-size:7.1px;color:#1a1a1a;font-style:italic;transform-origin:0 0;transform:scaleX(0.8096);-webkit-text-stroke:0.15px #1a1a1a;"><span style="text-decoration:underline;text-decoration-color:#e5484d;text-decoration-thickness:0.6px;text-underline-offset:0.8px;">efficitur</span> <span style="text-decoration:underline;text-decoration-color:#e5484d;text-decoration-thickness:0.6px;text-underline-offset:0.8px;">risus</span> sit <span style="text-decoration:underline;text-decoration-color:#e5484d;text-decoration-thickness:0.6px;text-underline-offset:0.8px;">amet luctus varius</span>, <span style="text-decoration:underline;text-decoration-color:#e5484d;text-decoration-thickness:0.6px;text-underline-offset:0.8px;">leo</span></div>
<div class="t" style="left:333.70px;top:155.00px;font-size:7.1px;color:#1a1a1a;font-style:italic;transform-origin:0 0;transform:scaleX(0.7900);-webkit-text-stroke:0.15px #1a1a1a;">libero, <span style="text-decoration:underline;text-decoration-color:#e5484d;text-decoration-thickness:0.6px;text-underline-offset:0.8px;">malesuada</span> <span style="text-decoration:underline;text-decoration-color:#e5484d;text-decoration-thickness:0.6px;text-underline-offset:0.8px;">eu vehicula</span>.</div>
<div class="j" style="left:333.70px;top:172.00px;width:111.14px;font-size:5.1px;color:#777;transform-origin:0 0;transform:scaleX(0.9339);">Video provides a powerful way to help you prove</div>
<div class="j" style="left:333.70px;top:179.00px;width:112.28px;font-size:5.1px;color:#777;transform-origin:0 0;transform:scaleX(0.9244);">your point. When you click Online Video, you can</div>
<div class="j" style="left:333.70px;top:186.00px;width:51.16px;font-size:5.1px;color:#777;transform-origin:0 0;transform:scaleX(0.9304);">for the video that best.</div>
<svg class="b" style="left:333px;top:227px" width="20" height="21"><rect x="1.00" y="1.70" width="17.40" height="17.40" rx="8.7" fill="#fff" stroke="#4a4f5e" stroke-width="1.1"/></svg>
<div class="t" style="left:243.00px;width:200px;text-align:center;top:233.00px;font-size:10.2px;color:#f9b61e;-webkit-text-stroke:0.35px #f9b61e;">A</div>
<svg class="b" style="left:333px;top:266px" width="20" height="21"><rect x="1.00" y="1.80" width="17.40" height="17.40" rx="8.7" fill="#fff" stroke="#4a4f5e" stroke-width="1.1"/></svg>
<div class="t" style="left:243.00px;width:200px;text-align:center;top:272.00px;font-size:10.2px;color:#f9b61e;-webkit-text-stroke:0.35px #f9b61e;">B</div>
<div class="j" style="left:357.20px;top:228.00px;width:149.14px;font-size:5px;color:#555;transform-origin:0 0;transform:scaleX(0.9387);">Video provides a way to help you prove your point. When you click</div>
<div class="j" style="left:357.20px;top:235.00px;width:145.49px;font-size:5px;color:#555;transform-origin:0 0;transform:scaleX(0.9622);">Online Video, you can paste in the embed code for the video you</div>
<div class="j" style="left:357.20px;top:242.00px;width:132.05px;font-size:5px;color:#555;transform-origin:0 0;transform:scaleX(0.9209);">want to add. You can also type a keyword to search online.</div>
<div class="j" style="left:357.2px;top:268.00px;width:140px;font-size:5px;color:#555;">Video provides a powerful way to help you prove <span style="text-decoration:underline;text-decoration-color:#3b6fd4;text-decoration-thickness:0.6px;">your a</span> point.</div>
<div class="j" style="left:357.20px;top:274.00px;width:147.75px;font-size:5px;color:#555;transform-origin:0 0;transform:scaleX(0.9476);">When you click Online Video, you can paste in the embed code to</div>
<div class="j" style="left:357.20px;top:281.00px;width:45.99px;font-size:5px;color:#555;transform-origin:0 0;transform:scaleX(0.9349);">search online for the</div>
<svg class="b" style="left:454px;top:139px" width="121" height="58"><rect x="1.40" y="1.20" width="118.60" height="55.20" rx="0" fill="#f9be2a"/></svg>
<svg class="b" style="left:467.40px;top:157.50px;" width="26.4" height="23.8" viewBox="0 0 26.4 23.8"><rect x="1.65" y="1.75" width="23" height="15.6" rx="1.3" fill="none" stroke="#1e2540" stroke-width="3.1"/><rect x="11.6" y="18.6" width="2" height="2.4" fill="#1e2540"/><rect x="4.1" y="20.5" width="18" height="2.8" rx="1" fill="#1e2540"/></svg>
<div class="t" style="left:504.00px;top:152.00px;font-size:6.8px;color:#1a1a1a;font-style:italic;transform-origin:0 0;transform:scaleX(0.8375);-webkit-text-stroke:0.15px #1a1a1a;">Online Video, you can</div>
<div class="t" style="left:504.00px;top:160.00px;font-size:6.8px;color:#1a1a1a;font-style:italic;transform-origin:0 0;transform:scaleX(0.8220);-webkit-text-stroke:0.15px #1a1a1a;">paste in the embed code</div>
<div class="t" style="left:504.00px;top:168.00px;font-size:6.8px;color:#1a1a1a;font-style:italic;transform-origin:0 0;transform:scaleX(0.8574);-webkit-text-stroke:0.15px #1a1a1a;">for the video you want to</div>
<div class="t" style="left:504.00px;top:176.00px;font-size:6.8px;color:#1a1a1a;font-style:italic;transform-origin:0 0;transform:scaleX(0.8538);-webkit-text-stroke:0.15px #1a1a1a;">add.</div>
<svg class="b" style="left:452px;top:136px" width="7" height="8"><rect x="1.00" y="1.80" width="4.80" height="4.80" rx="2.4" fill="#fff" stroke="#8a8a8a" stroke-width="0.6"/></svg>
<svg class="b" style="left:452px;top:192px" width="7" height="7"><rect x="1.00" y="1.00" width="4.80" height="4.80" rx="2.4" fill="#fff" stroke="#8a8a8a" stroke-width="0.6"/></svg>
<svg class="b" style="left:511px;top:136px" width="8" height="8"><rect x="1.30" y="1.80" width="4.80" height="4.80" rx="2.4" fill="#fff" stroke="#8a8a8a" stroke-width="0.6"/></svg>
<svg class="b" style="left:511px;top:192px" width="8" height="7"><rect x="1.30" y="1.00" width="4.80" height="4.80" rx="2.4" fill="#fff" stroke="#8a8a8a" stroke-width="0.6"/></svg>
<svg class="b" style="left:570px;top:136px" width="8" height="8"><rect x="1.60" y="1.80" width="4.80" height="4.80" rx="2.4" fill="#fff" stroke="#8a8a8a" stroke-width="0.6"/></svg>
<svg class="b" style="left:570px;top:192px" width="8" height="7"><rect x="1.60" y="1.00" width="4.80" height="4.80" rx="2.4" fill="#fff" stroke="#8a8a8a" stroke-width="0.6"/></svg>
<svg class="b" style="left:452px;top:164px" width="7" height="8"><rect x="1.00" y="1.40" width="4.80" height="4.80" rx="2.4" fill="#fff" stroke="#8a8a8a" stroke-width="0.6"/></svg>
<svg class="b" style="left:570px;top:164px" width="8" height="8"><rect x="1.60" y="1.40" width="4.80" height="4.80" rx="2.4" fill="#fff" stroke="#8a8a8a" stroke-width="0.6"/></svg>
<svg class="b" style="left:511.20px;top:129.20px;" width="6.4" height="6.4" viewBox="0 0 6.4 6.4"><path d="M1.4 4.6 A2.2 2.2 0 1 1 4.6 4.8" fill="none" stroke="#666" stroke-width="0.6"/><path d="M5.6 3.6 L4.6 5.6 L3.4 4.2 Z" fill="#666"/></svg>
<svg class="b" style="left:145px;top:383px" width="39" height="12"><rect x="1.20" y="1.80" width="36.70" height="8.80" rx="0" fill="#9b9fa8"/></svg>
<svg class="b" style="left:146.20px;top:384.80px;" width="4.4" height="8.8" viewBox="0 0 4.4 8.8"><path d="M0 0 L4.2 4.4 L0 8.8 Z" fill="#f9c53d"/></svg>
<div class="t" style="left:153.80px;top:387.00px;font-size:5.2px;color:#fff;font-weight:700;letter-spacing:0.497px;">Page | 5</div>
<svg class="b" style="left:181px;top:387px" width="281" height="4"><rect x="1.90" y="1.85" width="277.30" height="0.70" rx="0" fill="#a0a0a0"/></svg>
<svg class="b" style="left:553px;top:387px" width="73" height="4"><rect x="1.50" y="1.85" width="69.70" height="0.70" rx="0" fill="#a0a0a0"/></svg>
<div class="t" style="left:471.00px;top:387.00px;font-size:5.7px;color:#3a3a3a;letter-spacing:0.643px;">ANNUAL REPORT</div>
<div class="t" style="left:529.50px;top:387.00px;font-size:5.7px;color:#f7d277;letter-spacing:0.211px;">2019</div>
<div class="t" style="left:147.10px;top:415.00px;font-size:21.8px;color:#1b1f2b;transform-origin:0 0;transform:scaleX(0.8892);-webkit-text-stroke:0.75px #1b1f2b;">MESSAGE FROM</div>
<div class="t" style="left:148.80px;top:455.00px;font-size:16px;color:#1b1f2b;transform-origin:0 0;transform:scaleX(0.8909);-webkit-text-stroke:0.75px #1b1f2b;">THE CHAIRMAN</div>
<!-- format pane -->
<div class="b" style="left:725.30px;top:66.00px;width:124.70px;height:402.00px;background:#ececec;"></div>
<svg class="b" style="left:723px;top:65px" width="4" height="404"><rect x="1.70" y="1.00" width="1.00" height="402.00" rx="0" fill="#e1e1e1"/></svg>
<div class="t" style="left:733.00px;top:69.00px;font-size:6.6px;color:#1c1c1c;letter-spacing:-0.107px;-webkit-text-stroke:0.3px #1c1c1c;">Format Shape</div>
<svg class="b" style="left:839px;top:67px" width="9" height="10"><rect x="1.40" y="1.90" width="6.20" height="6.20" rx="3.1" fill="#5b5b5b"/></svg>
<svg class="b" style="left:841.60px;top:70.10px;" width="3.8" height="3.8" viewBox="0 0 3.8 3.8"><path d="M0.6 0.6 L3.2 3.2 M3.2 0.6 L0.6 3.2" stroke="#fff" stroke-width="0.8"/></svg>
<div class="b" style="left:730.70px;top:84.30px;width:113.50px;height:8.40px;background:#fdfdfd;border:0.5px solid #d8d8d8;box-sizing:border-box;border-radius:2px;"></div>
<div class="b" style="left:787.30px;top:84.30px;width:56.90px;height:8.40px;background:#6a6a6a;border-radius:0 2px 2px 0;"></div>
<div class="t" style="left:741.00px;top:86.00px;font-size:5.5px;color:#3a3a3a;letter-spacing:0.031px;">Shape Options</div>
<div class="t" style="left:799.20px;top:86.00px;font-size:5.5px;color:#fff;font-weight:700;transform-origin:0 0;transform:scaleX(0.9392);">Text Options</div>
<div class="b" style="left:730.70px;top:99.50px;width:16.80px;height:16.10px;background:#f7f7f7;border:0.5px solid #dcdcdc;box-sizing:border-box;border-bottom:none;border-radius:1.5px 1.5px 0 0;"></div>
<div class="b" style="left:725.80px;top:115.00px;width:5.10px;height:0.60px;background:#dadada;"></div>
<div class="b" style="left:747.30px;top:115.00px;width:102.70px;height:0.60px;background:#dadada;"></div>
<svg class="b" style="left:733.60px;top:102.20px;" width="11" height="10.6" viewBox="0 0 11 10.6"><path d="M5 1.2 L1.2 5.4 L5 9.2 L8.6 5.2 Z" fill="#fff" stroke="#3a3a3a" stroke-width="0.8"/><path d="M5 1.2 L5.8 0.4" stroke="#3a3a3a" stroke-width="0.7"/><path d="M6.6 2.8 C9 2.6 10.4 5 9.6 8.2" fill="none" stroke="#2f7de1" stroke-width="1.6"/></svg>
<svg class="b" style="left:751.60px;top:103.00px;" width="9.6" height="9.4" viewBox="0 0 9.6 9.4"><path d="M4.8 0.6 L9 3.8 L7.4 8.8 H2.2 L0.6 3.8 Z" fill="#fff" stroke="#444" stroke-width="0.7"/></svg>
<svg class="b" style="left:768.60px;top:102.60px;" width="10" height="10.2" viewBox="0 0 10 10.2"><path d="M1 0.4 V10 M9 0.4 V10" stroke="#666" stroke-width="0.8"/><path d="M1 1.6 H9 M1 9 H9" stroke="#999" stroke-width="0.5" stroke-dasharray="0.8 0.6"/><rect x="2.4" y="2.4" width="5.2" height="5.6" rx="1.2" fill="#2f7de1"/><path d="M2.6 2.6 L7.4 7.8 M7.4 2.6 L2.6 7.8" stroke="#fff" stroke-width="0.8"/><path d="M5 2 V8.4 M2 5.2 H8" stroke="#fff" stroke-width="0.5"/></svg>
<div class="b" style="left:725.80px;top:116.60px;width:124.20px;height:10.80px;background:#e3e3e3;"></div>
<div class="b" style="left:725.80px;top:127.20px;width:124.20px;height:0.60px;background:#d8d8d8;"></div>
<svg class="b" style="left:729.20px;top:120.30px;" width="4.6" height="4" viewBox="0 0 4.6 4"><path d="M0.2 0.3 H4.2 L2.2 3.7 Z" fill="#333"/></svg>
<div class="t" style="left:734.80px;top:120.00px;font-size:5.4px;color:#222;letter-spacing:-0.073px;-webkit-text-stroke:0.2px #222;">Fill</div>
<svg class="b" style="left:731px;top:131px" width="9" height="8"><rect x="1.60" y="1.00" width="6.00" height="6.00" rx="3" fill="#fff" stroke="#cdcdcd" stroke-width="0.5"/></svg>
<div class="t" style="left:740.60px;top:133.00px;font-size:5.2px;color:#222;letter-spacing:0.059px;">No fill</div>
<svg class="b" style="left:731px;top:139px" width="9" height="9"><rect x="1.60" y="1.20" width="6.00" height="6.00" rx="3" fill="#fff" stroke="#cdcdcd" stroke-width="0.5"/></svg>
<svg class="b" style="left:733px;top:141px" width="5" height="5"><rect x="1.50" y="1.10" width="2.20" height="2.20" rx="1.1" fill="#222"/></svg>
<div class="t" style="left:740.60px;top:141.00px;font-size:5.2px;color:#222;letter-spacing:0.051px;">Solid fill</div>
<svg class="b" style="left:731px;top:147px" width="9" height="9"><rect x="1.60" y="1.70" width="6.00" height="6.00" rx="3" fill="#fff" stroke="#cdcdcd" stroke-width="0.5"/></svg>
<div class="t" style="left:740.60px;top:150.00px;font-size:5.2px;color:#222;letter-spacing:0.065px;">Gradient fill</div>
<svg class="b" style="left:731px;top:156px" width="9" height="8"><rect x="1.60" y="1.00" width="6.00" height="6.00" rx="3" fill="#fff" stroke="#cdcdcd" stroke-width="0.5"/></svg>
<div class="t" style="left:740.60px;top:158.00px;font-size:5.2px;color:#222;letter-spacing:0.068px;">Picture or texture fill</div>
<svg class="b" style="left:731px;top:164px" width="9" height="9"><rect x="1.60" y="1.30" width="6.00" height="6.00" rx="3" fill="#fff" stroke="#cdcdcd" stroke-width="0.5"/></svg>
<div class="t" style="left:740.60px;top:166.00px;font-size:5.2px;color:#222;letter-spacing:0.077px;">Pattern fill</div>
<div class="b" style="left:733.00px;top:174.00px;width:109.30px;height:0.60px;background:#dcdcdc;"></div>
<div class="t" style="left:733.00px;top:180.00px;font-size:5.2px;color:#222;letter-spacing:0.001px;-webkit-text-stroke:0.15px #222;">Colour</div>
<div class="b" style="left:827.50px;top:177.30px;width:14.80px;height:9.50px;background:#b9b9b9;border:0.5px solid #a5a5a5;box-sizing:border-box;border-radius:1.6px;"></div>
<svg class="b" style="left:830.00px;top:178.00px;" width="8" height="8" viewBox="0 0 8 8"><path d="M3.4 0.8 L1.2 3.2 L3.4 5.2 L5.6 3 Z" fill="#fff" stroke="#555" stroke-width="0.5"/><path d="M5 1.2 C6.6 1.6 7 3 6.4 4.4 C6.2 3.4 5.8 2.8 5.2 2.4 Z" fill="#2f7de1"/><rect x="0.6" y="5.6" width="6.6" height="1.6" fill="#fbc01e"/></svg>
<svg class="b" style="left:838.60px;top:180.80px;" width="3" height="2.6" viewBox="0 0 3 2.6"><path d="M0.4 0.5 L1.5 2 L2.6 0.5" fill="none" stroke="#444" stroke-width="0.6"/></svg>
<div class="t" style="left:733.50px;top:192.00px;font-size:5.2px;color:#222;letter-spacing:-0.036px;-webkit-text-stroke:0.15px #222;">Transparency</div>
<div class="b" style="left:725.80px;top:202.90px;width:124.20px;height:0.60px;background:#dadada;"></div>
<svg class="b" style="left:729.40px;top:206.60px;" width="4" height="4.6" viewBox="0 0 4 4.6"><path d="M0.3 0.2 V4.2 L3.7 2.2 Z" fill="#333"/></svg>
<div class="t" style="left:734.80px;top:207.00px;font-size:5.4px;color:#222;letter-spacing:-0.126px;-webkit-text-stroke:0.2px #222;">Line</div>
<div class="b" style="left:768.20px;top:188.00px;width:87.80px;height:96.00px;background:#f1f1f1;border-radius:2.4px;box-shadow:0 1.5px 5px rgba(0,0,0,0.35),0 0 0 0.5px rgba(0,0,0,0.12);"></div>
<div class="t" style="left:772.40px;top:193.00px;font-size:5.9px;color:#222;transform-origin:0 0;transform:scaleX(0.9334);-webkit-text-stroke:0.2px #222;">Theme Colours</div>
<svg class="b" style="left:768.00px;top:188.00px;" width="82" height="80" viewBox="0 0 82 80"><rect x="4.40" y="13.20" width="6.5" height="6.9" fill="#ffffff" stroke="rgba(0,0,0,0.16)" stroke-width="0.4"/><rect x="4.40" y="22.90" width="6.5" height="6.66" fill="#f2f2f2"/><rect x="4.40" y="29.52" width="6.5" height="6.66" fill="#d9d9d9"/><rect x="4.40" y="36.14" width="6.5" height="6.66" fill="#bfbfbf"/><rect x="4.40" y="42.76" width="6.5" height="6.66" fill="#a6a6a6"/><rect x="4.40" y="49.38" width="6.5" height="6.66" fill="#7f7f7f"/><rect x="4.40" y="70.60" width="6.5" height="6.2" fill="#c00000" stroke="rgba(0,0,0,0.16)" stroke-width="0.4"/><rect x="11.87" y="13.20" width="6.5" height="6.9" fill="#000000" stroke="rgba(0,0,0,0.16)" stroke-width="0.4"/><rect x="11.87" y="22.90" width="6.5" height="6.66" fill="#7f7f7f"/><rect x="11.87" y="29.52" width="6.5" height="6.66" fill="#595959"/><rect x="11.87" y="36.14" width="6.5" height="6.66" fill="#404040"/><rect x="11.87" y="42.76" width="6.5" height="6.66" fill="#262626"/><rect x="11.87" y="49.38" width="6.5" height="6.66" fill="#0d0d0d"/><rect x="11.87" y="70.60" width="6.5" height="6.2" fill="#ff0000" stroke="rgba(0,0,0,0.16)" stroke-width="0.4"/><rect x="19.34" y="13.20" width="6.5" height="6.9" fill="#f9be2a" stroke="rgba(0,0,0,0.16)" stroke-width="0.4"/><rect x="19.34" y="22.90" width="6.5" height="6.66" fill="#fef2d4"/><rect x="19.34" y="29.52" width="6.5" height="6.66" fill="#fde5a9"/><rect x="19.34" y="36.14" width="6.5" height="6.66" fill="#fbd87f"/><rect x="19.34" y="42.76" width="6.5" height="6.66" fill="#d99d06"/><rect x="19.34" y="49.38" width="6.5" height="6.66" fill="#916904"/><rect x="19.34" y="70.60" width="6.5" height="6.2" fill="#ffc000" stroke="rgba(0,0,0,0.16)" stroke-width="0.4"/><rect x="26.81" y="13.20" width="6.5" height="6.9" fill="#1f2532" stroke="rgba(0,0,0,0.16)" stroke-width="0.4"/><rect x="26.81" y="22.90" width="6.5" height="6.66" fill="#cdd2de"/><rect x="26.81" y="29.52" width="6.5" height="6.66" fill="#9ba6bd"/><rect x="26.81" y="36.14" width="6.5" height="6.66" fill="#6a799c"/><rect x="26.81" y="42.76" width="6.5" height="6.66" fill="#171c26"/><rect x="26.81" y="49.38" width="6.5" height="6.66" fill="#0f1219"/><rect x="26.81" y="70.60" width="6.5" height="6.2" fill="#ffff00" stroke="rgba(0,0,0,0.16)" stroke-width="0.4"/><rect x="34.28" y="13.20" width="6.5" height="6.9" fill="#f7941d" stroke="rgba(0,0,0,0.16)" stroke-width="0.4"/><rect x="34.28" y="22.90" width="6.5" height="6.66" fill="#fde9d1"/><rect x="34.28" y="29.52" width="6.5" height="6.66" fill="#fbd4a4"/><rect x="34.28" y="36.14" width="6.5" height="6.66" fill="#fabe77"/><rect x="34.28" y="42.76" width="6.5" height="6.66" fill="#c96f07"/><rect x="34.28" y="49.38" width="6.5" height="6.66" fill="#864a05"/><rect x="34.28" y="70.60" width="6.5" height="6.2" fill="#92d050" stroke="rgba(0,0,0,0.16)" stroke-width="0.4"/><rect x="41.75" y="13.20" width="6.5" height="6.9" fill="#4a5263" stroke="rgba(0,0,0,0.16)" stroke-width="0.4"/><rect x="41.75" y="22.90" width="6.5" height="6.66" fill="#d8dbe2"/><rect x="41.75" y="29.52" width="6.5" height="6.66" fill="#b2b8c5"/><rect x="41.75" y="36.14" width="6.5" height="6.66" fill="#8b94a8"/><rect x="41.75" y="42.76" width="6.5" height="6.66" fill="#373d4a"/><rect x="41.75" y="49.38" width="6.5" height="6.66" fill="#252931"/><rect x="41.75" y="70.60" width="6.5" height="6.2" fill="#00b050" stroke="rgba(0,0,0,0.16)" stroke-width="0.4"/><rect x="49.22" y="13.20" width="6.5" height="6.9" fill="#a5a5a5" stroke="rgba(0,0,0,0.16)" stroke-width="0.4"/><rect x="49.22" y="22.90" width="6.5" height="6.66" fill="#ededed"/><rect x="49.22" y="29.52" width="6.5" height="6.66" fill="#dbdbdb"/><rect x="49.22" y="36.14" width="6.5" height="6.66" fill="#c9c9c9"/><rect x="49.22" y="42.76" width="6.5" height="6.66" fill="#7b7b7b"/><rect x="49.22" y="49.38" width="6.5" height="6.66" fill="#525252"/><rect x="49.22" y="70.60" width="6.5" height="6.2" fill="#00b0f0" stroke="rgba(0,0,0,0.16)" stroke-width="0.4"/><rect x="56.69" y="13.20" width="6.5" height="6.9" fill="#ffc000" stroke="rgba(0,0,0,0.16)" stroke-width="0.4"/><rect x="56.69" y="22.90" width="6.5" height="6.66" fill="#fff2cc"/><rect x="56.69" y="29.52" width="6.5" height="6.66" fill="#ffe699"/><rect x="56.69" y="36.14" width="6.5" height="6.66" fill="#ffd966"/><rect x="56.69" y="42.76" width="6.5" height="6.66" fill="#bf9000"/><rect x="56.69" y="49.38" width="6.5" height="6.66" fill="#7f6000"/><rect x="56.69" y="70.60" width="6.5" height="6.2" fill="#0070c0" stroke="rgba(0,0,0,0.16)" stroke-width="0.4"/><rect x="64.16" y="13.20" width="6.5" height="6.9" fill="#4a90d9" stroke="rgba(0,0,0,0.16)" stroke-width="0.4"/><rect x="64.16" y="22.90" width="6.5" height="6.66" fill="#dae9f7"/><rect x="64.16" y="29.52" width="6.5" height="6.66" fill="#b6d3ef"/><rect x="64.16" y="36.14" width="6.5" height="6.66" fill="#92bde8"/><rect x="64.16" y="42.76" width="6.5" height="6.66" fill="#2569b0"/><rect x="64.16" y="49.38" width="6.5" height="6.66" fill="#194676"/><rect x="64.16" y="70.60" width="6.5" height="6.2" fill="#002060" stroke="rgba(0,0,0,0.16)" stroke-width="0.4"/><rect x="71.63" y="13.20" width="6.5" height="6.9" fill="#5ba533" stroke="rgba(0,0,0,0.16)" stroke-width="0.4"/><rect x="71.63" y="22.90" width="6.5" height="6.66" fill="#e2efd9"/><rect x="71.63" y="29.52" width="6.5" height="6.66" fill="#c5e0b3"/><rect x="71.63" y="36.14" width="6.5" height="6.66" fill="#a8d08d"/><rect x="71.63" y="42.76" width="6.5" height="6.66" fill="#538135"/><rect x="71.63" y="49.38" width="6.5" height="6.66" fill="#2c4a1a"/><rect x="71.63" y="70.60" width="6.5" height="6.2" fill="#7030a0" stroke="rgba(0,0,0,0.16)" stroke-width="0.4"/><rect x="18.64" y="12.50" width="7.9" height="8.3" fill="none" stroke="#8a97b0" stroke-width="0.7"/><rect x="71.33" y="49.08" width="7.1" height="7.2" fill="none" stroke="#d5dccd" stroke-width="0.8"/></svg>
<div class="t" style="left:772.40px;top:250.00px;font-size:5.9px;color:#222;letter-spacing:-0.103px;-webkit-text-stroke:0.2px #222;">Standard Colours</div>
<svg class="b" style="left:780px;top:251px" width="71" height="10"><rect x="1.30" y="1.10" width="68.10" height="7.40" rx="0.8" fill="rgba(0,0,0,0.10)"/></svg>
<svg class="b" style="left:780px;top:251px" width="70" height="9"><rect x="1.80" y="1.20" width="67.10" height="6.50" rx="0" fill="#f5f3e6"/></svg>
<div class="t" style="left:784.20px;top:254.00px;font-size:4.9px;color:#222;letter-spacing:-0.030px;-webkit-text-stroke:0.15px #222;">Green, Accent 6, Darker 50%</div>
<svg class="b" style="left:770px;top:269px" width="81" height="3"><rect x="1.00" y="1.00" width="79.00" height="0.60" rx="0" fill="#dedede"/></svg>
<svg class="b" style="left:776.50px;top:273.50px;" width="7.6" height="7.6" viewBox="0 0 7.6 7.6"><circle cx="3.8" cy="3.8" r="3.5" fill="#f2b21d"/><path d="M3.8 3.8 L3.8 0.3 A3.5 3.5 0 0 1 7.1 4.9 Z" fill="#e8453c"/><path d="M3.8 3.8 L7.1 4.9 A3.5 3.5 0 0 1 1.7 6.6 Z" fill="#3b82e6"/><path d="M3.8 3.8 L1.7 6.6 A3.5 3.5 0 0 1 0.5 2.6 Z" fill="#4caf50"/></svg>
<div class="t" style="left:786.00px;top:275.00px;font-size:6.4px;color:#222;transform-origin:0 0;transform:scaleX(0.9293);-webkit-text-stroke:0.2px #222;">More Colours...</div>
<!-- status bar -->
<div class="b" style="left:0.00px;top:468.00px;width:850.00px;height:10.00px;background:#dfdfdf;"></div>
<div class="b" style="left:0.00px;top:467.70px;width:850.00px;height:0.70px;background:#cfcfcf;"></div>
<div class="t" style="left:10.00px;top:473.00px;font-size:4.8px;color:#4a4a4a;letter-spacing:0.232px;">Page 4 of 20</div>
<div class="t" style="left:48.60px;top:473.00px;font-size:4.8px;color:#4a4a4a;letter-spacing:0.319px;">3990 words</div>
<svg class="b" style="left:84.00px;top:470.40px;" width="7" height="6" viewBox="0 0 7 6"><rect x="0.4" y="0.6" width="4.4" height="4" rx="0.6" fill="none" stroke="#555" stroke-width="0.6"/><path d="M5.2 1.6 L6.6 3 L5.2 4.4" fill="none" stroke="#555" stroke-width="0.5"/></svg>
<div class="t" style="left:100.60px;top:473.00px;font-size:4.8px;color:#4a4a4a;letter-spacing:0.206px;">English (United States)</div>
<svg class="b" style="left:162.60px;top:470.20px;" width="5.6" height="6.4" viewBox="0 0 5.6 6.4"><circle cx="2.8" cy="1.4" r="1" fill="#444"/><path d="M0.4 3 H5.2 M2.8 2.6 V4.4 M2.8 4.4 L1.4 6.2 M2.8 4.4 L4.2 6.2" stroke="#444" stroke-width="0.7" fill="none"/></svg>
<svg class="b" style="left:675.20px;top:470.40px;" width="7" height="5.6" viewBox="0 0 7 5.6"><rect x="0.5" y="0.5" width="6" height="4.4" rx="0.6" fill="#f4f4f4" stroke="#444" stroke-width="0.7"/></svg>
<div class="t" style="left:684.60px;top:473.00px;font-size:4.8px;color:#4a4a4a;letter-spacing:0.164px;">Focus</div>
<div class="b" style="left:703.60px;top:468.40px;width:14.50px;height:9.60px;background:#b9b9b9;"></div>
<svg class="b" style="left:707.60px;top:470.60px;" width="6.6" height="5.4" viewBox="0 0 6.6 5.4"><rect x="0.4" y="0.4" width="5.8" height="4.6" fill="#d6d6d6" stroke="#8c8c8c" stroke-width="0.5"/><path d="M1.4 1.8 H5.2 M1.4 3.2 H5.2" stroke="#a0a0a0" stroke-width="0.4"/></svg>
<svg class="b" style="left:722.40px;top:470.40px;" width="6.6" height="6" viewBox="0 0 6.6 6"><path d="M0.4 0.8 H4.6 M0.4 2.4 H4.6 M0.4 4 H2.4" stroke="#444" stroke-width="0.8"/><circle cx="4.6" cy="4.2" r="1.5" fill="none" stroke="#444" stroke-width="0.7"/></svg>
<svg class="b" style="left:737.60px;top:470.60px;" width="6.4" height="5.6" viewBox="0 0 6.4 5.6"><path d="M0.4 1 H2.6 M0.4 2.8 H2.6 M0.4 4.6 H2.6" stroke="#a5a5a5" stroke-width="0.6"/><path d="M3.4 0.8 L5.8 2.8 L3.4 4.8" fill="none" stroke="#a5a5a5" stroke-width="0.6"/></svg>
<svg class="b" style="left:752.20px;top:470.60px;" width="6" height="5.6" viewBox="0 0 6 5.6"><path d="M0.4 0.8 H5.6 M1.4 2.2 H5.6 M0.4 3.6 H5.6 M1.4 5 H5.6" stroke="#8c8c8c" stroke-width="0.6"/></svg>
<div class="b" style="left:766.60px;top:472.90px;width:2.60px;height:0.70px;background:#444;"></div>
<div class="b" style="left:773.00px;top:473.00px;width:40.90px;height:0.60px;background:#8a8a8a;"></div>
<div class="b" style="left:792.90px;top:470.90px;width:4.80px;height:4.80px;background:#fff;border:0.4px solid #bdbdbd;box-sizing:border-box;border-radius:3px;"></div>
<svg class="b" style="left:817.20px;top:471.70px;" width="3.4" height="3.4" viewBox="0 0 3.4 3.4"><path d="M0.2 1.7 H3.2 M1.7 0.2 V3.2" stroke="#444" stroke-width="0.7"/></svg>
<div class="t" style="left:827.80px;top:473.00px;font-size:4.8px;color:#4a4a4a;letter-spacing:-0.020px;">150%</div>
</div></body></html>
